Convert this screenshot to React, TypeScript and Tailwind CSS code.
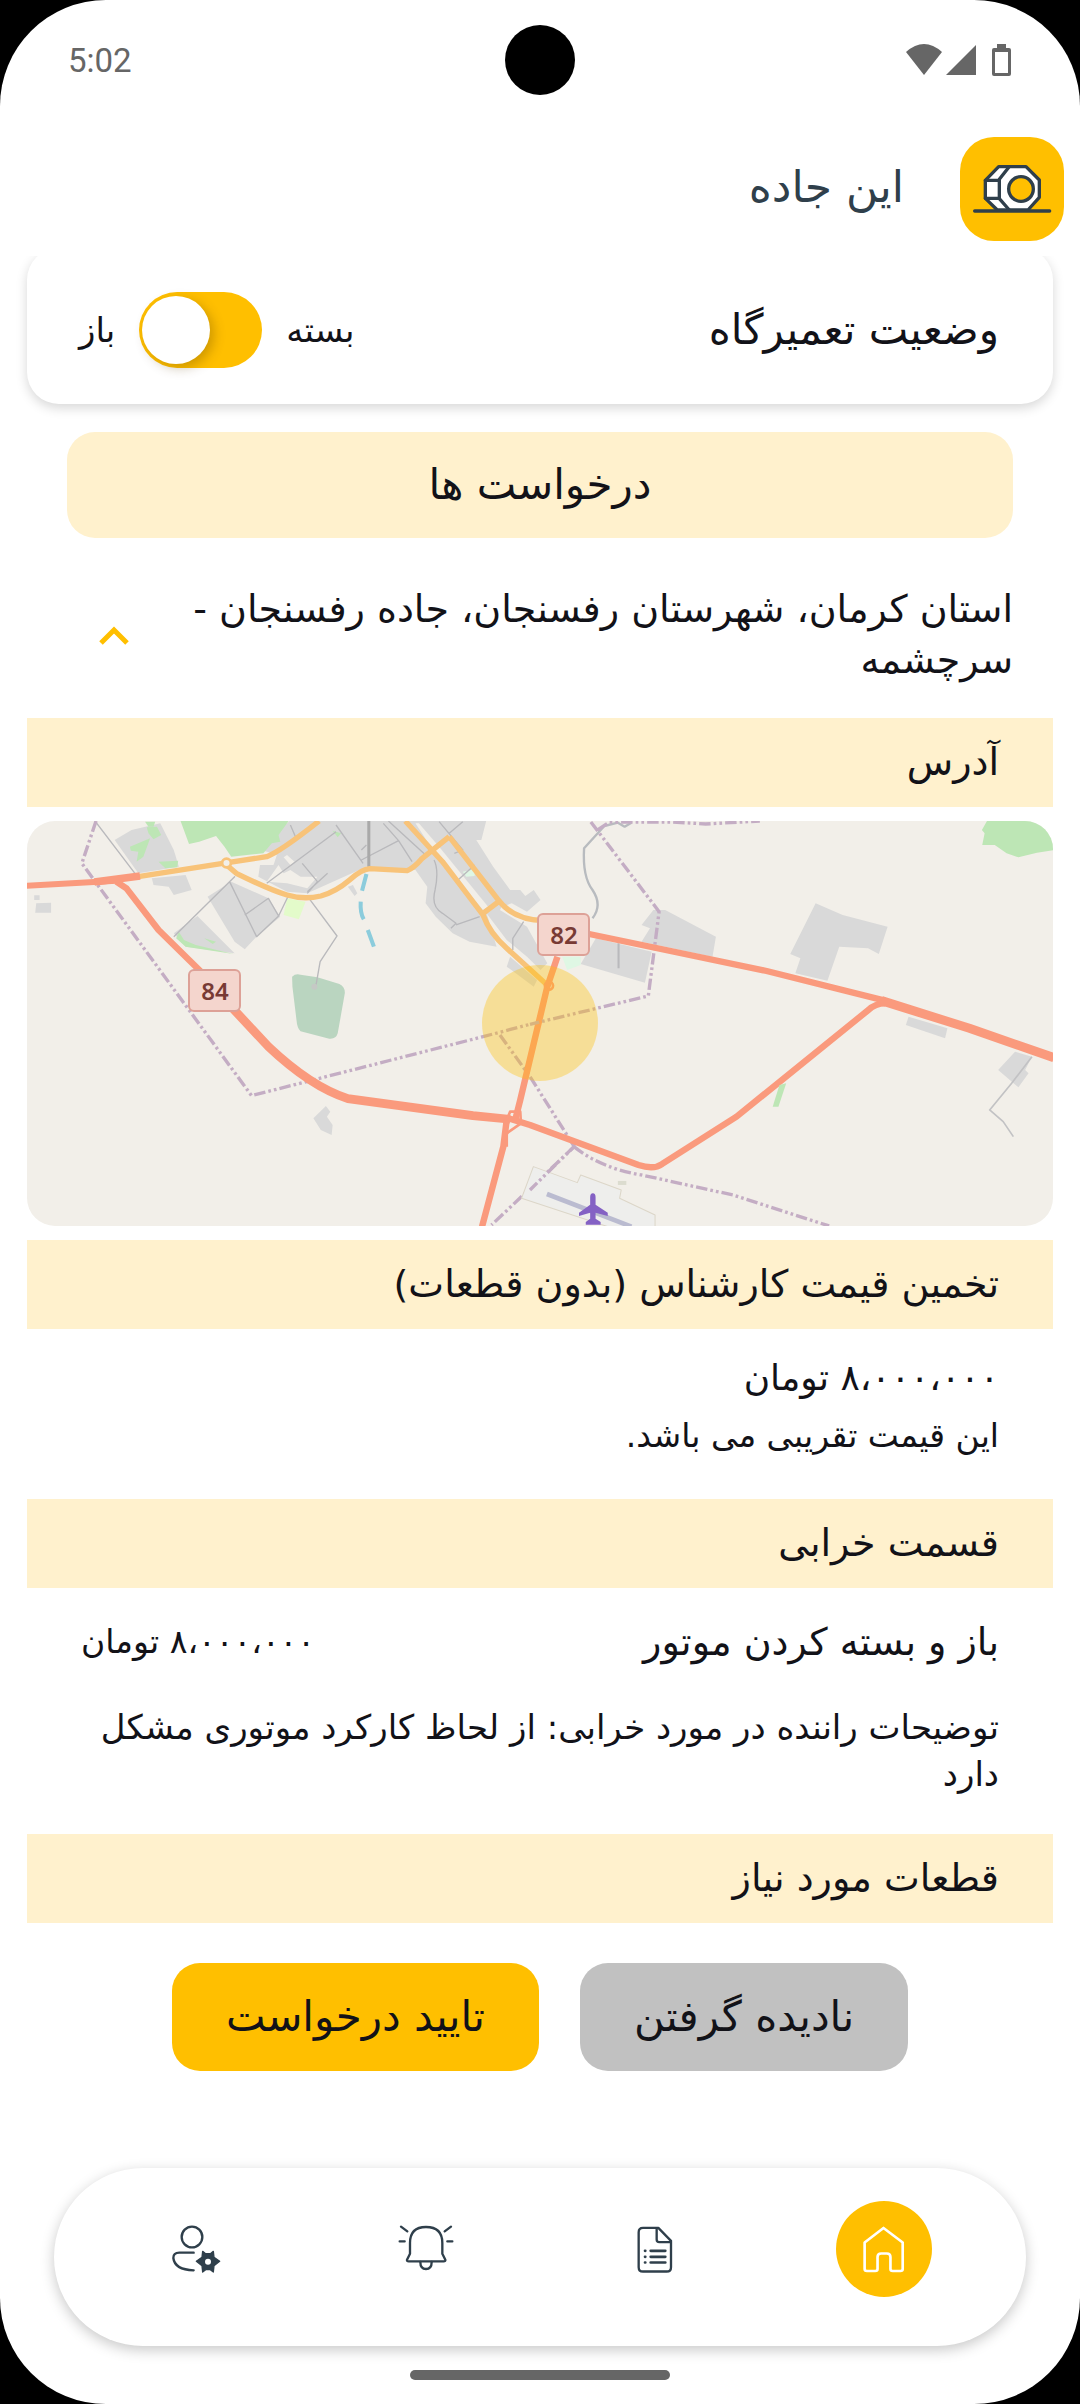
import { useState, type ReactNode } from "react";

const requestAddress = "استان کرمان، شهرستان رفسنجان، جاده رفسنجان - سرچشمه";

function StatusBar() {
  return (
    <header dir="ltr" className="relative flex h-[120px] items-center justify-between px-[68px]">
      <time className="text-[33px] leading-none text-[#666666] font-[Roboto,sans-serif]">5:02</time>
      <span className="absolute top-[25px] left-1/2 size-[70px] -translate-x-1/2 rounded-full bg-black" />
      <svg viewBox="0 0 106 34" className="h-[34px] w-[106px]" fill="#666666" aria-label="Wi-Fi, signal, battery">
        <path d="M0 9 Q18 -7 36 9 L18 32 Z" />
        <path d="M40 32 L70 2 V32 Z" />
        <path d="M91 1 h9 v4 h3 q2 0 2 2 v24 q0 2 -2 2 h-15 q-2 0 -2 -2 v-24 q0 -2 2 -2 h3 Z M89 9 v21 h13 v-21 Z" fillRule="evenodd" />
      </svg>
    </header>
  );
}

function NutLogo() {
  return (
    <svg viewBox="122 81 312 312" className="size-[104px] rounded-[34px] bg-[#ffbf00]" fill="none" stroke="#2f3f4b" strokeWidth="10" strokeLinecap="round" strokeLinejoin="round" aria-hidden="true">
      <path d="M238 170 H320 L360 210 V262 L326 300 H234 L198 265 V211 Z" fill="#fff" />
      <path d="M269 171 L240 208 V266 L270 300 M198 211 H240 M198 265 H240" />
      <circle cx="305" cy="237" r="37" fill="#ffbf00" />
      <path d="M166 303 H391" />
    </svg>
  );
}

function StatusSwitch() {
  const [closed, setClosed] = useState(false);
  return (
    <label className="flex items-center gap-6 text-[34px] leading-[50px]">
      <span>بسته</span>
      <span dir="ltr" className="relative flex h-[76px] w-[123px]">
        <input
          type="checkbox"
          role="switch"
          aria-label="وضعیت تعمیرگاه"
          checked={closed}
          onChange={(e) => setClosed(e.target.checked)}
          className="peer h-full w-full cursor-pointer appearance-none rounded-full bg-[#ffbf00]"
        />
        <span className="pointer-events-none absolute top-1 left-[3px] size-[68px] rounded-full bg-white shadow-[4px_4px_12px_rgba(90,60,0,0.3)] transition-transform peer-checked:translate-x-[49px]" />
      </span>
      <span>باز</span>
    </label>
  );
}

function SectionTitle({ children }: { children: ReactNode }) {
  return <h2 className="bg-[#fff1cd] px-[54px] py-4 text-[38px] leading-[57px]">{children}</h2>;
}

function RoadShield({ x, y, label }: { x: number; y: number; label: string }) {
  return (
    <g>
      <rect x={x} y={y} width="51" height="41" rx="5" fill="#f4d5cd" stroke="#dda197" strokeWidth="2" />
      <text x={x + 26} y={y + 30} textAnchor="middle" fontSize="24" fontWeight="600" fontFamily="Noto Sans, sans-serif" fill="#783a34">
        {label}
      </text>
    </g>
  );
}

function RoadMap() {
  return (
    <svg viewBox="0 0 1026 405" className="my-[14px] block h-auto w-full rounded-[28px] bg-[#f2efe9]" role="img" aria-label="نقشه" fontFamily="Noto Sans">
      <g transform="translate(-7 -11) scale(0.338 0.3333)" fill="none" strokeLinejoin="round">
        <g fill="#d9d9d9">
          <path d="M280 90 L330 60 L415 40 L455 120 L470 170 L350 190 Z" />
          <path d="M390 205 L490 195 L508 240 L455 255 L440 230 L395 225 Z" />
          <path d="M800 30 H1380 L1365 90 L1350 90 L1400 170 L1450 240 L1480 240 L1495 258 L1520 240 L1540 270 L1500 305 L1455 280 L1425 290 L1420 300 L1500 350 L1560 460 L1540 480 L1500 440 L1440 390 L1380 310 L1390 340 L1410 410 L1330 395 L1280 370 L1230 320 L1200 280 L1205 230 L1170 180 L1025 170 L850 250 L790 245 L705 200 L710 165 L750 165 L760 135 L715 120 L770 60 Z" />
          <path d="M555 260 L625 215 L735 265 L770 320 L700 380 L665 418 L635 395 Z" />
          <path d="M455 370 L525 318 L635 430 L490 410 Z" />
          <path d="M48 280 L92 278 V308 H45 Z M42 256 h16 v14 h-16 Z" />
          <path d="M905 888 L918 905 L908 920 L925 945 L922 975 L890 960 L868 925 Z" />
          <path d="M970 230 L985 225 L998 250 L990 258 Z" />
          <path d="M1450 440 L1530 510 L1520 530 L1440 470 Z" />
        </g>
        <g fill="#f2efe9">
          <path d="M790 135 L812 155 L800 165 L780 142 Z M765 165 L780 190 L800 180 L830 200 L880 200 L850 235 L790 220 L730 215 Z" />
          <path d="M1170 40 L1215 110 L1245 150 L1370 300 L1385 290 L1240 110 L1180 40 Z" />
        </g>
        <g fill="#bde6b5">
          <path d="M475 33 H795 L765 75 L770 95 L745 100 L720 130 L625 140 L605 110 L580 78 L530 95 L500 102 Z" />
          <path d="M325 110 L385 85 L365 140 L345 155 L350 125 L328 122 Z M370 35 h30 l-5 15 h-15 Z M375 52 L405 50 L418 75 L395 88 L380 70 Z M410 155 L468 152 L465 172 L430 175 Z" />
          <path d="M470 365 L462 385 L490 410 L632 432 L520 405 L485 390 Z M545 385 L580 395 L570 402 Z" />
          <path d="M925 62 l25 8 l-10 12 Z" />
        </g>
        <path d="M790 265 L845 275 L825 328 L780 315 Z" fill="#e3fbca" />
        <path d="M1310 185 L1345 178 V198 L1320 200 Z" fill="#dff7e4" />
        <path d="M805 500 Q815 490 830 494 L880 502 L945 522 Q962 530 961 550 L940 670 Q935 688 915 686 L830 664 Q820 655 818 630 L806 530 Z" fill="#bad5c0" />
        <g stroke="#b9b9bc" strokeWidth="4">
          <path d="M222 33 L340 190 M455 380 L635 200 L620 215 L700 380 L765 318 L735 265 L665 315 M765 318 L795 255" />
          <path d="M730 220 L935 65 M800 45 L815 80 M835 160 L880 215 L850 250 M910 190 L850 245 M935 45 L1015 160 M1010 150 L1120 92 M1075 40 L1120 92 L1160 155 M1010 120 L1025 105" />
          <path d="M1090 33 L1200 135 M1240 35 L1310 120 L1285 130 M1310 35 L1270 70 M1290 215 L1345 165 M1225 150 Q1240 180 1228 240 Q1215 290 1250 310 L1290 340 L1275 355 M1290 345 L1360 320 M1490 335 L1458 385 V420" />
          <path d="M855 265 L938 378 L888 455 L875 530" />
        </g>
        <circle cx="871" cy="530" r="9" fill="#c5c9c5" />
        <path d="M1032 33 V170" stroke="#a9a9a9" strokeWidth="9" />
        <g stroke="#8cccdc" strokeWidth="12">
          <path d="M1025 192 L1012 242 M1008 275 Q1006 310 1017 328 M1029 360 L1047 410" />
        </g>
        <g stroke="#c4adc4" strokeWidth="10" strokeDasharray="34 9 8 9 8 9">
          <path d="M225 33 L183 160 L685 857 L1370 680 L1509 643" />
          <path d="M1420 675 L1509 800 L1640 1010 L1395 1245" />
        </g>
        <g stroke="#f8c379" strokeWidth="16">
          <path d="M350 200 L600 160 L730 140 Q770 125 885 33" />
          <path d="M605 160 L640 190 Q740 240 790 255 T890 258 Q935 245 975 210 Q1010 178 1035 176 L1145 182 Q1165 175 1190 145 L1270 80" />
          <path d="M1140 33 L1250 155 L1370 315 Q1390 370 1440 415 L1565 530" />
          <path d="M1270 80 L1415 270 Q1460 330 1550 332 M1370 310 L1420 272" />
        </g>
        <circle cx="611" cy="159" r="13" stroke="#f8c379" strokeWidth="8" fill="#f2efe9" />
        <g stroke="#fa9a7d">
          <path d="M20 227 L285 212" strokeWidth="18" />
          <path d="M220 216 L355 198" strokeWidth="23" />
          <path d="M285 215 L315 235 L410 360 L540 490" strokeWidth="19" />
          <path d="M620 585 L735 710 Q860 830 970 866 L1340 917 L1450 928" strokeWidth="26" />
          <path d="M1590 440 L1560 530 L1480 870 L1465 930 M1440 930 L1430 1010 L1367 1250 M1445 925 L1509 945 L1830 1065 Q1875 1080 1900 1062 L2120 920 L2510 600 Q2530 580 2560 580" strokeWidth="19" />
          <path d="M1440 930 L1450 905 H1480 L1482 940 L1440 970 M1440 970 V1010" strokeWidth="8" />
        </g>
        <circle cx="1565" cy="527" r="12" stroke="#fa9a7d" strokeWidth="8" />
      </g>
      <g transform="translate(503 -11) scale(0.338 0.3333)" fill="none" strokeLinejoin="round">
        <g fill="#d9d9d9">
          <path d="M330 345 L365 300 L400 300 L550 380 L540 440 L330 395 L355 355 Z" />
          <path d="M195 385 L360 425 L340 518 L150 462 Z" />
          <path d="M845 280 L925 315 L1058 350 L1032 432 L1000 415 L915 410 L880 512 L785 490 L800 445 L770 432 Z" />
          <path d="M1120 620 L1235 655 L1228 685 L1112 645 Z" />
          <path d="M1435 725 L1485 740 L1465 780 L1475 790 L1445 832 L1385 780 Z" />
        </g>
        <path d="M1352 33 H1550 V120 L1500 128 L1445 142 L1410 130 L1375 105 H1338 L1345 70 L1337 60 Z" fill="#bde6b5" />
        <path d="M738 825 L758 820 L735 890 H718 Z" fill="#bde6b5" />
        <path d="M95 440 H150 L150 465 L110 480 Z" fill="#dff7e4" />
        <path d="M10 1070 L140 1118 L150 1095 L270 1140 L265 1165 L370 1215 V1250 H230 L-25 1165 Z" fill="#eeeeec" stroke="#dcd6c8" strokeWidth="3" />
        <path d="M50 1152 L300 1250" stroke="#babbd0" strokeWidth="14" />
        <path d="M260 1113 h25 v12 h-25 Z" fill="#dcdccf" />
        <path d="M300 38 L280 50 L260 38 L220 48 L160 115 Q155 200 185 240 Q215 285 185 325" stroke="#b8bbbf" strokeWidth="7" />
        <path d="M262 400 V475" stroke="#b9b9bc" strokeWidth="6" />
        <path d="M1485 740 L1425 820 L1360 900 L1400 935 L1430 980" stroke="#c2c2c4" strokeWidth="5" />
        <g stroke="#c4adc4" strokeWidth="10" strokeDasharray="34 9 8 9 8 9">
          <path d="M180 36 L382 305 L350 558 L0 643" />
          <path d="M200 60 L235 36 H420 L520 42 L680 33" />
          <path d="M130 1010 Q210 1075 330 1095 L600 1155 L885 1248" />
          <path d="M130 1010 L0 1140" />
        </g>
        <path d="M175 372 L700 483 L1050 572" stroke="#fa9a7d" strokeWidth="19" />
        <path d="M1040 572 L1300 655 L1550 743" stroke="#fa9a7d" strokeWidth="27" />
        <path d="M186 1150 q8 0 8 12 v22 l36 24 v10 l-36 -10 v18 l15 10 v8 h-44 v-8 l13 -10 v-18 l-33 10 v-10 l33 -24 v-22 q0 -12 8 -12 Z" fill="#8461c4" />
      </g>
      <circle cx="513" cy="202" r="58" fill="#ffbf00" fillOpacity="0.35" />
      <RoadShield x={162} y={149} label="84" />
      <RoadShield x={511} y={93} label="82" />
    </svg>
  );
}

function UserGearIcon() {
  return (
    <svg viewBox="98 108 147 147" className="size-[49px]" fill="none" stroke="#2f3f4b" strokeWidth="7" strokeLinecap="round" aria-hidden="true">
      <circle cx="158" cy="144" r="31" />
      <path d="M163 191 H120 Q102 191 102 207 Q106 242 163 244" />
      <path d="M190 187 L199 194 H213 L222 187 L224 205 L241 217 L224 230 L222 249 L213 242 H199 L190 249 L188 230 L171 217 L188 205 Z" fill="#2f3f4b" strokeWidth="4" strokeLinejoin="round" />
      <circle cx="206" cy="218" r="9" fill="#fff" stroke="none" />
    </svg>
  );
}

function BellIcon() {
  return (
    <svg viewBox="772 96 168 168" className="size-14" fill="none" stroke="#2f3f4b" strokeWidth="7" strokeLinecap="round" strokeLinejoin="round" aria-hidden="true">
      <path d="M808 162 Q808 114 856 114 Q905 114 905 162 V194 L914 212 Q915 217 909 217 H804 Q798 217 799 212 L808 194 Z" />
      <path d="M839 219 Q839 240 856 240 Q873 240 873 219 M781 113 L800 127 M777 157 H792 M931 113 L912 127 M920 157 H935" />
    </svg>
  );
}

function FileIcon() {
  return (
    <svg viewBox="104 106 120 146" className="h-[49px] w-10" fill="none" stroke="#2f3f4b" strokeWidth="7" strokeLinecap="round" strokeLinejoin="round" aria-hidden="true">
      <path d="M128 114 H174 L212 153 V232 Q212 245 199 245 H128 Q115 245 115 232 V127 Q115 114 128 114 Z" />
      <path d="M169 115 V149 Q169 157 177 157 H211" />
      <path d="M151 183 H195 M151 201 H195 M151 218 H195 M134 183 h1 M134 201 h1 M134 218 h1" strokeWidth="8" />
    </svg>
  );
}

function HomeIcon() {
  return (
    <svg viewBox="778 105 148 148" className="size-[49px]" fill="none" stroke="#fff" strokeWidth="8" strokeLinecap="round" strokeLinejoin="round" aria-hidden="true">
      <path d="M852 114 L910 158 V238 Q910 244 903 244 H880 Q873 244 873 238 V202 Q873 191 862 191 H845 Q834 191 834 202 V238 Q834 244 827 244 H802 Q795 244 795 238 V158 Z" />
    </svg>
  );
}

const tabs = [
  { label: "خانه", icon: <HomeIcon />, active: true },
  { label: "گزارش ها", icon: <FileIcon />, active: false },
  { label: "اعلان ها", icon: <BellIcon />, active: false },
  { label: "حساب کاربری", icon: <UserGearIcon />, active: false },
];

function BottomNav() {
  return (
    <nav className="mx-[54px] mt-auto flex rounded-full bg-white px-7 pt-[33px] pb-[49px] shadow-[0_4px_14px_rgba(0,0,0,0.22)]">
      {tabs.map((tab) => (
        <a key={tab.label} href="#" aria-label={tab.label} className="flex flex-1 justify-center">
          <span className={tab.active ? "flex size-24 items-center justify-center rounded-full bg-[#ffbf00]" : "flex size-24 items-center justify-center"}>
            {tab.icon}
          </span>
        </a>
      ))}
    </nav>
  );
}

export default function App() {
  const [open, setOpen] = useState(true);
  return (
    <div className="bg-black">
      <div dir="rtl" lang="fa" className="flex min-h-screen flex-col rounded-[106px] bg-white text-[#121218] font-['DejaVu_Sans',sans-serif]">
        <StatusBar />
        <div className="flex items-center gap-14 px-4 pt-[17px] pb-[15px]">
          <NutLogo />
          <h1 className="pb-1 text-[44px] leading-[48px] text-[#2f3f4b]">این جاده</h1>
        </div>

        <main className="overflow-hidden">
          <div className="px-[27px]">
            <section className="-mt-2 flex items-center justify-between rounded-[32px] bg-white pt-11 pr-[54px] pb-9 pl-[52px] shadow-[0_4px_12px_rgba(0,0,0,0.16)]">
              <h2 className="text-[42px] leading-[60px]">وضعیت تعمیرگاه</h2>
              <StatusSwitch />
            </section>
          </div>

          <h2 className="mx-[67px] mt-7 rounded-[28px] bg-[#fff1cd] py-5 text-center text-[42px] leading-[66px]">درخواست ها</h2>

          <button type="button" aria-expanded={open} onClick={() => setOpen(!open)} className="flex w-full items-center justify-between gap-4 pt-[46px] pr-[67px] pb-8 pl-[99px] text-right">
            <span className="flex-1 text-[38px] leading-[51px]">{requestAddress}</span>
            <svg viewBox="0 0 30 19" className="h-[19px] w-[30px]" fill="none" stroke="#ffbf00" strokeWidth="5" aria-hidden="true">
              <path d="M2 17 L15 4 L28 17" />
            </svg>
          </button>

          {open && (
            <article className="px-[27px]">
              <SectionTitle>آدرس</SectionTitle>
              <RoadMap />
              <SectionTitle>تخمین قیمت کارشناس (بدون قطعات)</SectionTitle>
              <div className="px-[54px] pt-5 pb-[34px]">
                <p className="text-[36px] leading-[58px]">۸،۰۰۰،۰۰۰ تومان</p>
                <p className="text-[33px] leading-[58px]">این قیمت تقریبی می باشد.</p>
              </div>
              <SectionTitle>قسمت خرابی</SectionTitle>
              <div className="flex flex-col gap-9 px-[54px] pt-7 pb-9">
                <div className="flex items-center justify-between leading-[52px]">
                  <span className="text-[38px]">باز و بسته کردن موتور</span>
                  <span className="text-[33px]">۸،۰۰۰،۰۰۰ تومان</span>
                </div>
                <p className="text-[34px] leading-[47px]">توضیحات راننده در مورد خرابی: از لحاظ کارکرد موتوری مشکل دارد</p>
              </div>
              <SectionTitle>قطعات مورد نیاز</SectionTitle>
              <div className="flex justify-center gap-[41px] pt-10 pb-12 text-[42px] leading-[68px]">
                <button type="button" className="rounded-[28px] bg-[#c1c1c1] px-[54px] py-5">نادیده گرفتن</button>
                <button type="button" className="rounded-[28px] bg-[#ffbf00] px-[54px] py-5">تایید درخواست</button>
              </div>
            </article>
          )}
        </main>

        <BottomNav />
        <div className="mx-auto my-6 h-[10px] w-[260px] rounded-full bg-[#666666]" />
      </div>
    </div>
  );
}
